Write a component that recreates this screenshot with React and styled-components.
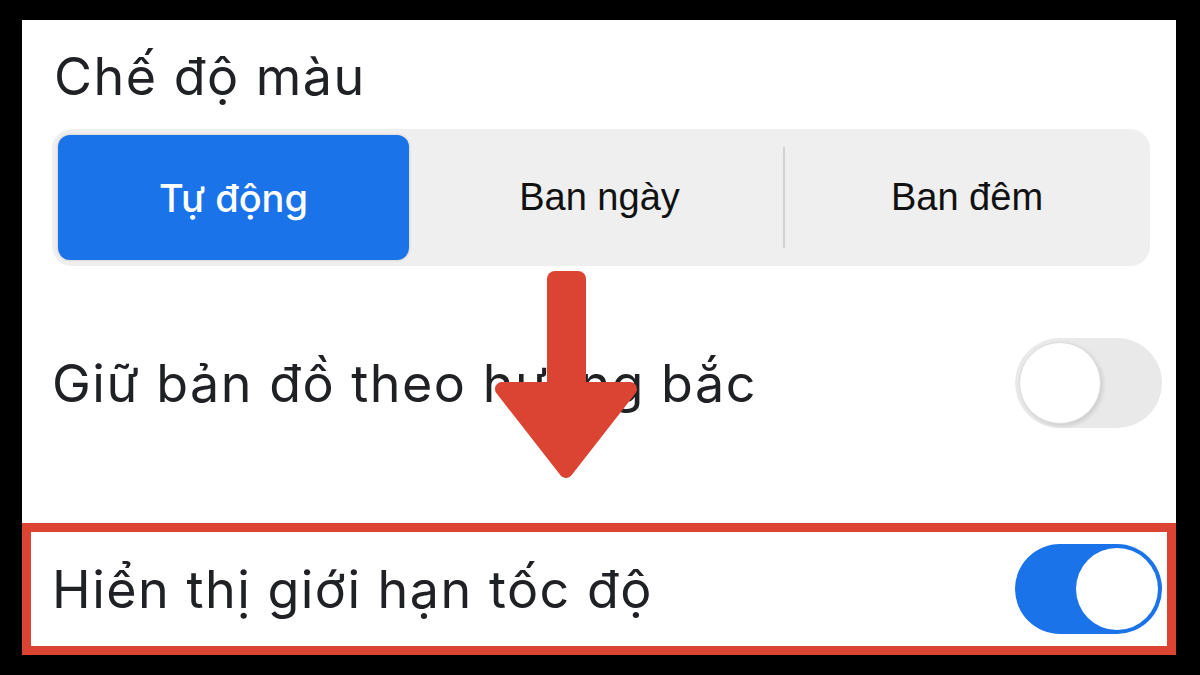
import React from 'react'
import styled, { createGlobalStyle } from 'styled-components'

const GlobalStyle = createGlobalStyle`
    html, body {
        margin: 0;
        padding: 0;
        background: #000;
    }
`

const Frame = styled.div`
    width: 1200px;
    height: 675px;
    box-sizing: border-box;
    padding: 20px 24px 20px 22px;
    background: #000;
`

const Panel = styled.div`
    position: relative;
    height: 100%;
    background: #fff;
    display: flex;
    flex-direction: column;
    overflow: hidden;
`

const Title = styled.h2`
    margin: 24px 0 0 32px;
    font-family: Inter, "Noto Sans", sans-serif;
    font-weight: 400;
    font-size: 52px;
    letter-spacing: 1.5px;
    line-height: 66px;
    color: #202124;
`

const Segmented = styled.div`
    margin: 19px 26px 0 30px;
    height: 137px;
    box-sizing: border-box;
    padding: 6px;
    border-radius: 20px;
    background: #efefef;
    display: grid;
    grid-template-columns: 351px 375px 1fr;
    align-items: stretch;
`

const Segment = styled.div`
    position: relative;
    display: flex;
    align-items: center;
    justify-content: center;
    border-radius: 12px;
    background: ${props => props.$active ? '#1a73e8' : 'transparent'};
    color: ${props => props.$active ? '#fff' : '#111'};
    font-family: ${props => props.$active ? 'Inter, "Noto Sans", sans-serif' : '"Liberation Sans", Arial, sans-serif'};
    font-weight: ${props => props.$active ? 500 : 400};
    font-size: 38px;
    padding-left: ${props => props.$active ? '0' : '6px'};
    box-shadow: ${props => props.$active ? '0 0 3px rgba(0,0,0,0.18)' : 'none'};

    ${props => props.$divider && `
        &::before {
            content: '';
            position: absolute;
            left: -1px;
            top: 12px;
            bottom: 12px;
            width: 2px;
            background: #d2d2d2;
        }
    `}
`

const Row = styled.div`
    display: flex;
    align-items: center;
    justify-content: space-between;
    box-sizing: border-box;
    margin-top: ${props => props.$highlight ? '95px' : '72px'};
    height: ${props => props.$highlight ? '132px' : '90px'};
    padding: ${props => props.$highlight ? '0 5px 0 21px' : '0 14px 0 30px'};
    border: ${props => props.$highlight ? '9px solid #db4332' : 'none'};
`

const Label = styled.span`
    font-family: Inter, "Noto Sans", sans-serif;
    font-size: 52px;
    letter-spacing: 1.5px;
    color: #202124;
`

const Track = styled.div`
    width: 147px;
    height: 90px;
    box-sizing: border-box;
    padding: 4px;
    border-radius: 45px;
    display: flex;
    justify-content: ${props => props.$on ? 'flex-end' : 'flex-start'};
    align-items: center;
    background: ${props => props.$on ? '#1a73e8' : '#e9e9ea'};
`

const Knob = styled.div`
    width: 82px;
    height: 82px;
    border-radius: 50%;
    background: #fff;
    box-sizing: border-box;
    border: ${props => props.$on ? 'none' : '1px solid #dcdcdc'};
    box-shadow: ${props => props.$on ? 'none' : '2px 2px 4px rgba(0,0,0,0.12)'};
`

const Arrow = styled.svg`
    position: absolute;
    left: 473px;
    top: 251px;
    width: 142px;
    height: 210px;
`

const Toggle = ({ on }) => (
    <Track $on={on}>
        <Knob $on={on} />
    </Track>
)

const App = () => {
    return (
        <Frame>
            <GlobalStyle />
            <Panel>
                <Title>Chế độ màu</Title>
                <Segmented>
                    <Segment $active>Tự động</Segment>
                    <Segment>Ban ngày</Segment>
                    <Segment $divider>Ban đêm</Segment>
                </Segmented>
                <Row>
                    <Label>Giữ bản đồ theo hướng bắc</Label>
                    <Toggle on={false} />
                </Row>
                <Row $highlight>
                    <Label>Hiển thị giới hạn tốc độ</Label>
                    <Toggle on />
                </Row>
                <Arrow viewBox="0 0 142 210">
                    <rect x="52" y="0" width="39" height="130" rx="8" fill="#db4332" />
                    <polygon points="7,118 135,118 71,200" fill="#db4332" stroke="#db4332" strokeWidth="14" strokeLinejoin="round" />
                </Arrow>
            </Panel>
        </Frame>
    )
}

export default App
